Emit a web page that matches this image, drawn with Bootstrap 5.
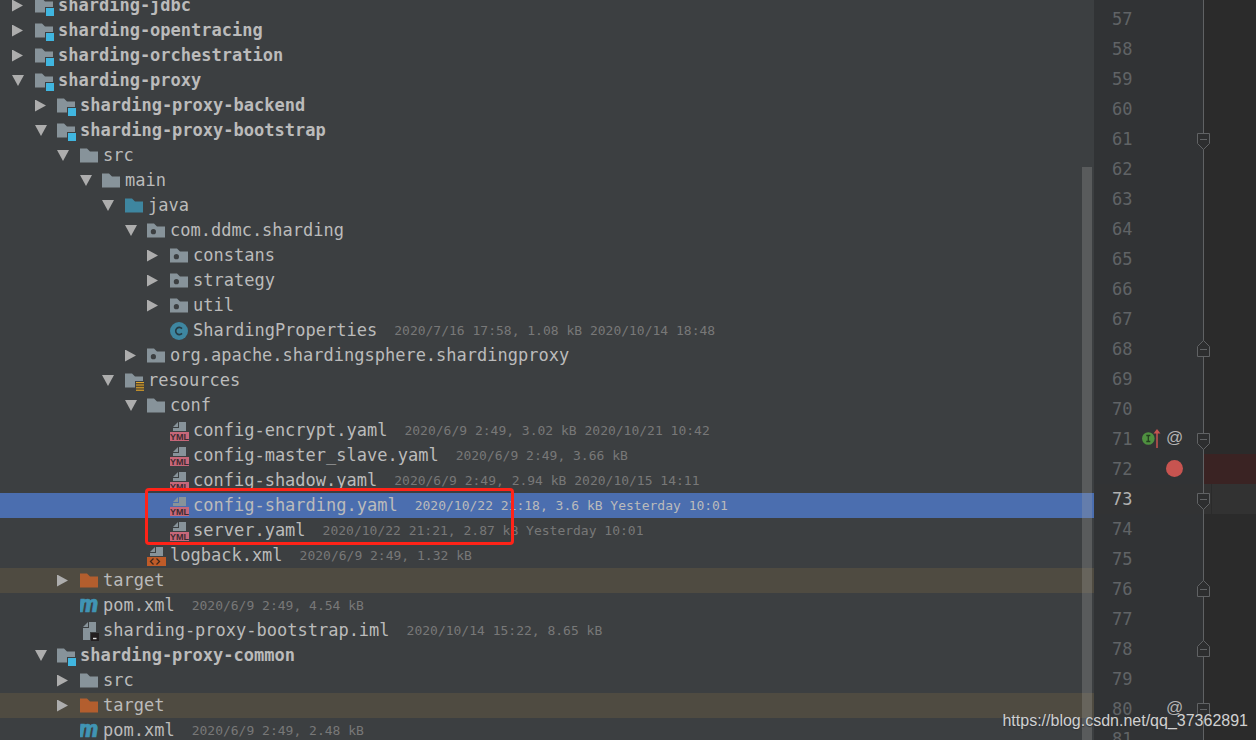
<!DOCTYPE html>
<html lang="en">
<head>
<meta charset="utf-8">
<meta name="viewport" content="width=device-width, initial-scale=1">
<title>Project</title>
<link href="https://cdn.jsdelivr.net/npm/bootstrap@5.3.0/dist/css/bootstrap.min.css" rel="stylesheet">
<style>
  body { background: #3c3f41; color: #bbbbbb; font-family: "DejaVu Sans Mono", monospace; font-size: 17px; line-height: 25px; }
  svg { display: block; flex: none; }
  .project { background: #3c3f41; min-width: 0; }
  .tree { margin-top: -7px; }
  .node { height: 25px; white-space: nowrap; --slot: 23px; }
  .node > b, .node > span { line-height: 27px; }
  .lv1, .lv3, .lv5 { --slot: 22px; }
  .lv0 { padding-left: 12px; } .lv1 { padding-left: 35px; } .lv2 { padding-left: 57px; }
  .lv3 { padding-left: 80px; } .lv4 { padding-left: 102px; } .lv5 { padding-left: 125px; } .lv6 { padding-left: 147px; }
  .toggle { width: var(--slot); height: 12px; flex: none; }
  .toggle::before { content: ""; display: block; width: 11px; height: 12px; background: #adadad; clip-path: polygon(0 0, 100% 50%, 0 100%); }
  .toggle.open::before { width: 12px; height: 11px; clip-path: polygon(0 0, 100% 0, 50% 100%); }
  .leaf::before { content: ""; width: var(--slot); flex: none; }
  .kind { width: 20px; height: 20px; margin-right: 3px; }
  .node .meta { font-size: 13px; line-height: 28px; color: #787878; margin-left: 17px; }
  .excluded { background: #4f4b41; }
  .chosen { background: #4b6eaf; }
  .chosen .meta { color: #bbbbbb; }
  .thumb { right: 2px; top: 167px; bottom: 0; width: 10px; background: rgba(166,166,166,.28); }
  .marker-box { left: 145px; top: -5px; width: 369px; height: 57px; border: 3px solid #ff2318; border-radius: 4px; }
  .editor { width: 162px; padding-top: 4px; background: linear-gradient(to right, #313335 109px, #606264 109px 110px, #2b2b2b 110px); }
  .line { height: 30px; line-height: 31px; padding-left: 18px; color: #606366; }
  .num { width: 26px; }
  .marks { width: 59px; padding-left: 4px; }
  .fold { width: 13px; height: 30px; }
  .at { color: #b4b4b4; font: 17px/28px "Liberation Sans", Arial, sans-serif; width: 17px; text-align: center; }
  .stopped { background: linear-gradient(to right, transparent 109px, #3a2323 109px); }
  .current { background: linear-gradient(to right, #323334 109px, #323232 109px 117px, #2b2b2b 117px 118px, #323232 118px); color: #b0b0b0; }
  .mark-url { right: 8px; bottom: 7px; color: #d0d0d0; font: 16px/24px "Liberation Sans", Arial, sans-serif; text-shadow: 0 1px 1px #333; }
</style>
</head>
<body class="vh-100 overflow-hidden position-relative">

<svg class="d-none" aria-hidden="true">
  <defs>
    <path id="shape" d="M0 2.4h7l3 3h8v11H0z"/>
    <symbol id="folder" viewBox="0 0 20 20"><use href="#shape" fill="#87939a"/></symbol>
    <symbol id="source" viewBox="0 0 20 20"><use href="#shape" fill="#3e86a0"/></symbol>
    <symbol id="orange" viewBox="0 0 20 20"><use href="#shape" fill="#b35e2e"/></symbol>
    <symbol id="package" viewBox="0 0 20 20"><use href="#shape" fill="#87939a"/><circle cx="6.4" cy="10.7" r="2.6" fill="#3c3f41"/></symbol>
    <symbol id="module" viewBox="0 0 20 20"><path d="M0 2.4h7l3 3h8v5.6h-8v5.4H0z" fill="#87939a"/><path d="M11 12h8v8h-8z" fill="#40b6e0"/></symbol>
    <symbol id="resources" viewBox="0 0 20 20"><path d="M0 2.4h7l3 3h8v4.6h-8v6.4H0z" fill="#87939a"/><path d="M11 11h8v9h-8z" fill="#5b4b2c"/><path d="M11 11.5h8M11 14h8M11 16.7h8M11 19.3h8" stroke="#e0a52c" stroke-width="1.1"/></symbol>
    <symbol id="klass" viewBox="0 0 20 20"><circle cx="9" cy="10" r="9" fill="#3e86a0"/><path d="M12 7.6A3.6 3.6 0 1 0 12 12.4" fill="none" stroke="#263b44" stroke-width="1.6"/></symbol>
    <symbol id="yml" viewBox="0 0 20 20"><path d="M9 1h7v9H3V7h6z" fill="#87939a"/><path d="M3 6l5-5v5z" fill="#87939a"/><path d="M0 11h19v9H0z" fill="#c76779"/><text x="9.5" y="19" text-anchor="middle" font-family="Liberation Sans, sans-serif" font-weight="bold" font-size="9" fill="#3c2b31">YML</text></symbol>
    <symbol id="xml" viewBox="0 0 20 20"><path d="M9 1h7v9H3V7h6z" fill="#87939a"/><path d="M3 6l5-5v5z" fill="#87939a"/><path d="M0 11h19v9H0z" fill="#bf5b28"/><path d="M6.5 12.5l-3 3 3 3M9.5 12.5l3 3-3 3" fill="none" stroke="#40281c" stroke-width="1.3"/></symbol>
    <symbol id="maven" viewBox="0 0 20 20"><text x="-1" y="16" font-family="Roboto, sans-serif" font-weight="900" font-style="italic" font-size="23" fill="#4094b4" stroke="#4094b4" stroke-width=".7">m</text></symbol>
    <symbol id="iml" viewBox="0 0 20 20"><path d="M9 1h7v10h-6v8H3V7h6z" fill="#87939a"/><path d="M3 6l5-5v5z" fill="#87939a"/><path d="M11 12h8v8h-8z" fill="#231f20"/><path d="M13 17.5h3.5" stroke="#ddd" stroke-width="1.4"/></symbol>
    <symbol id="foldDown" viewBox="0 0 13 30"><path d="M.5 9.5h12v10l-6 6-6-6z" fill="#2d2e2f" stroke="#606264"/><path d="M3 15.5h7" stroke="#606264"/></symbol>
    <symbol id="foldUp" viewBox="0 0 13 30"><path d="M.5 22.5h12v-10l-6-6-6 6z" fill="#2d2e2f" stroke="#606264"/><path d="M3 15.5h7" stroke="#606264"/></symbol>
    <symbol id="rule" viewBox="0 0 13 30"><path d="M6.5 0v30" stroke="#606264"/></symbol>
  </defs>
</svg>

<div class="d-flex h-100">
  <main class="project flex-grow-1 position-relative overflow-hidden">
    <ul class="tree list-unstyled mb-0">
      <li class="node d-flex align-items-center lv0"><button class="toggle btn p-0 border-0 rounded-0" aria-label="Expand"></button><svg class="kind"><use href="#module"/></svg><b>sharding-jdbc</b></li>
      <li class="node d-flex align-items-center lv0"><button class="toggle btn p-0 border-0 rounded-0" aria-label="Expand"></button><svg class="kind"><use href="#module"/></svg><b>sharding-opentracing</b></li>
      <li class="node d-flex align-items-center lv0"><button class="toggle btn p-0 border-0 rounded-0" aria-label="Expand"></button><svg class="kind"><use href="#module"/></svg><b>sharding-orchestration</b></li>
      <li class="node d-flex align-items-center lv0"><button class="toggle open btn p-0 border-0 rounded-0" aria-label="Collapse"></button><svg class="kind"><use href="#module"/></svg><b>sharding-proxy</b></li>
      <li class="node d-flex align-items-center lv1"><button class="toggle btn p-0 border-0 rounded-0" aria-label="Expand"></button><svg class="kind"><use href="#module"/></svg><b>sharding-proxy-backend</b></li>
      <li class="node d-flex align-items-center lv1"><button class="toggle open btn p-0 border-0 rounded-0" aria-label="Collapse"></button><svg class="kind"><use href="#module"/></svg><b>sharding-proxy-bootstrap</b></li>
      <li class="node d-flex align-items-center lv2"><button class="toggle open btn p-0 border-0 rounded-0" aria-label="Collapse"></button><svg class="kind"><use href="#folder"/></svg><span>src</span></li>
      <li class="node d-flex align-items-center lv3"><button class="toggle open btn p-0 border-0 rounded-0" aria-label="Collapse"></button><svg class="kind"><use href="#folder"/></svg><span>main</span></li>
      <li class="node d-flex align-items-center lv4"><button class="toggle open btn p-0 border-0 rounded-0" aria-label="Collapse"></button><svg class="kind"><use href="#source"/></svg><span>java</span></li>
      <li class="node d-flex align-items-center lv5"><button class="toggle open btn p-0 border-0 rounded-0" aria-label="Collapse"></button><svg class="kind"><use href="#package"/></svg><span>com.ddmc.sharding</span></li>
      <li class="node d-flex align-items-center lv6"><button class="toggle btn p-0 border-0 rounded-0" aria-label="Expand"></button><svg class="kind"><use href="#package"/></svg><span>constans</span></li>
      <li class="node d-flex align-items-center lv6"><button class="toggle btn p-0 border-0 rounded-0" aria-label="Expand"></button><svg class="kind"><use href="#package"/></svg><span>strategy</span></li>
      <li class="node d-flex align-items-center lv6"><button class="toggle btn p-0 border-0 rounded-0" aria-label="Expand"></button><svg class="kind"><use href="#package"/></svg><span>util</span></li>
      <li class="node d-flex align-items-center lv6 leaf"><svg class="kind"><use href="#klass"/></svg><span>ShardingProperties</span><span class="meta">2020/7/16 17:58, 1.08 kB 2020/10/14 18:48</span></li>
      <li class="node d-flex align-items-center lv5"><button class="toggle btn p-0 border-0 rounded-0" aria-label="Expand"></button><svg class="kind"><use href="#package"/></svg><span>org.apache.shardingsphere.shardingproxy</span></li>
      <li class="node d-flex align-items-center lv4"><button class="toggle open btn p-0 border-0 rounded-0" aria-label="Collapse"></button><svg class="kind"><use href="#resources"/></svg><span>resources</span></li>
      <li class="node d-flex align-items-center lv5"><button class="toggle open btn p-0 border-0 rounded-0" aria-label="Collapse"></button><svg class="kind"><use href="#folder"/></svg><span>conf</span></li>
      <li class="node d-flex align-items-center lv6 leaf"><svg class="kind"><use href="#yml"/></svg><span>config-encrypt.yaml</span><span class="meta">2020/6/9 2:49, 3.02 kB 2020/10/21 10:42</span></li>
      <li class="node d-flex align-items-center lv6 leaf"><svg class="kind"><use href="#yml"/></svg><span>config-master_slave.yaml</span><span class="meta">2020/6/9 2:49, 3.66 kB</span></li>
      <li class="node d-flex align-items-center lv6 leaf"><svg class="kind"><use href="#yml"/></svg><span>config-shadow.yaml</span><span class="meta">2020/6/9 2:49, 2.94 kB 2020/10/15 14:11</span></li>
      <li class="node d-flex align-items-center lv6 leaf chosen position-relative"><svg class="kind"><use href="#yml"/></svg><span>config-sharding.yaml</span><span class="meta">2020/10/22 21:18, 3.6 kB Yesterday 10:01</span><span class="marker-box position-absolute z-1"></span></li>
      <li class="node d-flex align-items-center lv6 leaf"><svg class="kind"><use href="#yml"/></svg><span>server.yaml</span><span class="meta">2020/10/22 21:21, 2.87 kB Yesterday 10:01</span></li>
      <li class="node d-flex align-items-center lv5 leaf"><svg class="kind"><use href="#xml"/></svg><span>logback.xml</span><span class="meta">2020/6/9 2:49, 1.32 kB</span></li>
      <li class="node d-flex align-items-center lv2 excluded"><button class="toggle btn p-0 border-0 rounded-0" aria-label="Expand"></button><svg class="kind"><use href="#orange"/></svg><span>target</span></li>
      <li class="node d-flex align-items-center lv2 leaf"><svg class="kind"><use href="#maven"/></svg><span>pom.xml</span><span class="meta">2020/6/9 2:49, 4.54 kB</span></li>
      <li class="node d-flex align-items-center lv2 leaf"><svg class="kind"><use href="#iml"/></svg><span>sharding-proxy-bootstrap.iml</span><span class="meta">2020/10/14 15:22, 8.65 kB</span></li>
      <li class="node d-flex align-items-center lv1"><button class="toggle open btn p-0 border-0 rounded-0" aria-label="Collapse"></button><svg class="kind"><use href="#module"/></svg><b>sharding-proxy-common</b></li>
      <li class="node d-flex align-items-center lv2"><button class="toggle btn p-0 border-0 rounded-0" aria-label="Expand"></button><svg class="kind"><use href="#folder"/></svg><span>src</span></li>
      <li class="node d-flex align-items-center lv2 excluded"><button class="toggle btn p-0 border-0 rounded-0" aria-label="Expand"></button><svg class="kind"><use href="#orange"/></svg><span>target</span></li>
      <li class="node d-flex align-items-center lv2 leaf"><svg class="kind"><use href="#maven"/></svg><span>pom.xml</span><span class="meta">2020/6/9 2:49, 2.48 kB</span></li>
    </ul>
    <div class="thumb position-absolute"></div>
  </main>

  <aside class="editor flex-shrink-0 overflow-hidden">
    <div class="line d-flex"><span class="num">57</span></div>
    <div class="line d-flex"><span class="num">58</span></div>
    <div class="line d-flex"><span class="num">59</span></div>
    <div class="line d-flex"><span class="num">60</span></div>
    <div class="line d-flex"><span class="num">61</span><span class="marks"></span><svg class="fold"><use href="#foldDown"/></svg></div>
    <div class="line d-flex"><span class="num">62</span></div>
    <div class="line d-flex"><span class="num">63</span></div>
    <div class="line d-flex"><span class="num">64</span></div>
    <div class="line d-flex"><span class="num">65</span></div>
    <div class="line d-flex"><span class="num">66</span></div>
    <div class="line d-flex"><span class="num">67</span></div>
    <div class="line d-flex"><span class="num">68</span><span class="marks"></span><svg class="fold"><use href="#foldUp"/></svg></div>
    <div class="line d-flex"><span class="num">69</span></div>
    <div class="line d-flex"><span class="num">70</span></div>
    <div class="line d-flex"><span class="num">71</span><span class="marks d-flex"><svg width="24" height="30" viewBox="0 0 24 30"><circle cx="6.3" cy="14.5" r="6.3" fill="#4f9140"/><path d="M4.3 11.5h4M6.3 11.5v6M4.3 17.5h4" stroke="#24401f" stroke-width="1.3"/><path d="M15 24V8" stroke="#c75450" stroke-width="1.5"/><path d="M11.5 9.5L15 5l3.5 4.500z" fill="#c75450"/></svg><span class="at">@</span></span><svg class="fold"><use href="#foldDown"/></svg></div>
    <div class="line d-flex stopped"><span class="num">72</span><span class="marks d-flex"><svg class="ms-4" width="18" height="30" viewBox="0 0 18 30"><circle cx="8.5" cy="14.5" r="8.5" fill="#c75450"/></svg></span><svg class="fold"><use href="#rule"/></svg></div>
    <div class="line d-flex current"><span class="num">73</span><span class="marks"></span><svg class="fold"><use href="#rule"/><use href="#foldDown"/></svg></div>
    <div class="line d-flex"><span class="num">74</span></div>
    <div class="line d-flex"><span class="num">75</span></div>
    <div class="line d-flex"><span class="num">76</span><span class="marks"></span><svg class="fold"><use href="#foldUp"/></svg></div>
    <div class="line d-flex"><span class="num">77</span></div>
    <div class="line d-flex"><span class="num">78</span><span class="marks"></span><svg class="fold"><use href="#foldUp"/></svg></div>
    <div class="line d-flex"><span class="num">79</span></div>
    <div class="line d-flex"><span class="num">80</span><span class="marks d-flex"><span class="at ms-4">@</span></span><svg class="fold"><use href="#foldDown"/></svg></div>
    <div class="line d-flex"><span class="num">81</span></div>
  </aside>
</div>

<span class="mark-url position-absolute">https://blog.csdn.net/qq_37362891</span>
<script src="https://cdn.jsdelivr.net/npm/bootstrap@5.3.0/dist/js/bootstrap.bundle.min.js"></script>
</body>
</html>
